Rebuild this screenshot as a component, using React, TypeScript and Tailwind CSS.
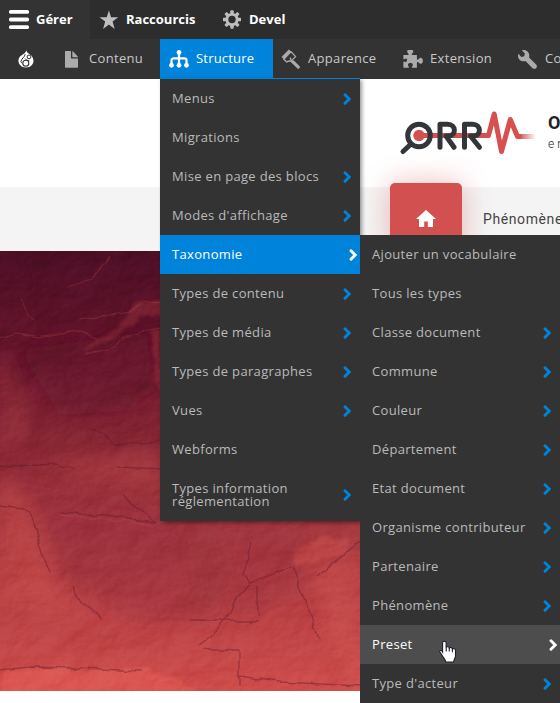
import React from "react";

const Chevron = ({ color, className = "" }: { color: string; className?: string }) => (
  <svg width="9" height="12" viewBox="0 0 9 12" className={className}>
    <path d="M2 1.8L6.2 6L2 10.2" fill="none" stroke={color} strokeWidth="2.9" strokeLinecap="round" strokeLinejoin="miter" />
  </svg>
);

type Item = { label: string; sub?: boolean; state?: "blue" | "grey"; tall?: boolean };

const structure: Item[] = [
  { label: "Menus", sub: true },
  { label: "Migrations" },
  { label: "Mise en page des blocs", sub: true },
  { label: "Modes d'affichage", sub: true },
  { label: "Taxonomie", sub: true, state: "blue" },
  { label: "Types de contenu", sub: true },
  { label: "Types de média", sub: true },
  { label: "Types de paragraphes", sub: true },
  { label: "Vues", sub: true },
  { label: "Webforms" },
  { label: "Types information réglementation", sub: true, tall: true },
];

const taxonomy: Item[] = [
  { label: "Ajouter un vocabulaire" },
  { label: "Tous les types" },
  { label: "Classe document", sub: true },
  { label: "Commune", sub: true },
  { label: "Couleur", sub: true },
  { label: "Département", sub: true },
  { label: "Etat document", sub: true },
  { label: "Organisme contributeur", sub: true },
  { label: "Partenaire", sub: true },
  { label: "Phénomène", sub: true },
  { label: "Preset", sub: true, state: "grey" },
  { label: "Type d'acteur", sub: true },
];

const Menu = ({ items }: { items: Item[] }) => (
  <ul className="w-[200px] bg-[#333]">
    {items.map((it) => (
      <li
        key={it.label}
        className={`flex items-center justify-between pl-3 ${it.tall ? "h-[52px]" : "h-[39px]"} ${
          it.state === "blue"
            ? "bg-[#0084db] pr-0.5 font-medium text-white"
            : it.state === "grey"
              ? "bg-[#4d4d4d] pr-0.5 font-medium text-white"
              : "pr-2 text-[#bababa]"
        }`}
      >
        <span className={it.tall ? "w-[140px] leading-[13px]" : "whitespace-nowrap"}>{it.label}</span>
        {it.sub && <Chevron color={it.state ? "#fff" : "#0084db"} className="shrink-0" />}
      </li>
    ))}
  </ul>
);

const Burger = () => (
  <svg width="20" height="19" viewBox="0 0 20 19" fill="#fff">
    <rect width="20" height="3.8" rx="1.6" />
    <rect y="7.6" width="20" height="3.8" rx="1.6" />
    <rect y="15.2" width="20" height="3.8" rx="1.6" />
  </svg>
);

const Star = () => (
  <svg width="20" height="20" viewBox="0 0 20 20" fill="#bebebe">
    <path d="M9.9 .4l2.2 6.8 7.1.1-5.6 4.3 2.1 7.3-5.8-4.3-5.8 4.3 2.1-7.3L.5 7.3l7.2-.1z" />
  </svg>
);

const Gear = () => (
  <svg width="18" height="19" viewBox="0 0 18 19">
    <g fill="#bebebe">
      {[0, 45, 90, 135].map((a) => (
        <rect key={a} x="7.3" y=".3" width="3.4" height="18.4" rx=".9" transform={`rotate(${a} 9 9.5)`} />
      ))}
      <circle cx="9" cy="9.5" r="6.6" />
    </g>
    <circle cx="9" cy="9.5" r="3.7" fill="#2d2d2d" />
  </svg>
);

const Drop = () => (
  <svg width="16" height="18" viewBox="0 0 16 18">
    <path d="M8.5 0C8.4 2.5 11 3.4 13 5.2c4.3 4 3.2 12.3-5 12.4C.2 17.6-1.5 9.5 2.6 6.1 4.9 4.3 7.7 3.3 8.5 0z" fill="#fff" />
    <circle cx="7.8" cy="13.2" r="3" fill="none" stroke="#333" strokeWidth="1.1" />
    <circle cx="11" cy="6.9" r="1.9" fill="none" stroke="#333" strokeWidth="1" />
    <path d="M7.2 4.2C7 7.2 3 8.6 3 11.5c0 1 .6 1.5 1.4 1.6M7 8.5c.8 1.3 2.5 2.3 4.4 2.3" fill="none" stroke="#333" strokeWidth="1" />
  </svg>
);

const File = () => (
  <svg width="13" height="17" viewBox="0 0 13 17" fill="#ababab">
    <path d="M.6 0H6v7c0 .4.2.6.6.6H13v8.5c0 .4-.2.6-.6.6H.6c-.4 0-.6-.2-.6-.6V.6C0 .2.2 0 .6 0z" />
    <path d="M7.3.5c0-.4.3-.5.6-.2l4.9 5.3c.3.3.1.6-.3.6H8c-.5 0-.7-.2-.7-.7z" />
  </svg>
);

const Org = () => (
  <svg width="20" height="18" viewBox="0 0 20 18" fill="#fff">
    <circle cx="10" cy="2.5" r="2.4" />
    <circle cx="2.5" cy="15.3" r="2.4" />
    <circle cx="10" cy="15.3" r="2.4" />
    <circle cx="17.5" cy="15.3" r="2.4" />
    <path d="M2.5 15V10.5Q2.5 8.4 4.6 8.4H15.4Q17.5 8.4 17.5 10.5V15M10 3V15" fill="none" stroke="#fff" strokeWidth="2.2" />
  </svg>
);

const Brush = () => (
  <svg width="19" height="20" viewBox="0 0 19 20">
    <path d="M7.9.5L.5 7.9l2.3 2.3L10 2.6z" fill="#ababab" />
    <path d="M10 2.6l4.6 5-4.9 4.8q-1.7-1.1-4 .6L2.8 10.2z" fill="none" stroke="#ababab" strokeWidth="1.3" strokeLinejoin="round" />
    <path d="M9.2 8.5l1.2 4.1L12.2 14" stroke="#ababab" strokeWidth="1.3" fill="none" />
    <path d="M12 12.8L17.3 18.1" stroke="#ababab" strokeWidth="3.1" strokeLinecap="round" />
  </svg>
);

const Puzzle = () => (
  <svg width="20" height="18" viewBox="0 0 20 18" fill="#ababab">
    <path d="M.4 5H5q1.2 0 .5-1.1L4.300 2.300Q3.700.2 5.200.1h4.100q1.500.1.900 2.200L8.800 3.900Q8.300 5 9.500 5h4.400v3.800q.1 1.300 1.300.6l1.800-1.600q2.700-.7 2.900 2.700-.2 4-2.900 3.200l-1.700-1.500q-1.400-.7-1.400.6v4.900H9.300c-.7 0-.7-.6-.2-1.100 1.500-1.500.7-3.500-1.700-3.500s-3.200 2-1.700 3.500c.5.500.5 1.100-.2 1.100H.4V12.300q0-1.300 1.300-.6c2.300 1.500 3.600-3.700.9-3.200L1.400 9.200Q.4 9.700.4 8.500z" />
  </svg>
);

const Wrench = () => (
  <svg width="19" height="19" viewBox="0 0 15.1 15.1" fill="#ababab">
    <path d="M14.416 11.586l-5.666-5.665c.15-.449.252-.921.252-1.421 0-2.485-2.016-4.5-4.502-4.5-.505 0-.981.102-1.434.255l2.431 2.431-.588 2.196-2.196.588-2.445-2.445c-.162.464-.268.956-.268 1.475 0 2.486 2.014 4.5 4.5 4.5.5 0 .972-.102 1.421-.251l5.667 5.665c.781.781 2.047.781 2.828 0s.781-2.047 0-2.828z" />
  </svg>
);

const Logo = () => (
  <svg width="138" height="46" viewBox="399 110 138 46" fill="none" strokeLinecap="round" strokeLinejoin="round" className="shrink-0">
    <defs>
      <linearGradient id="fade" gradientUnits="userSpaceOnUse" x1="519" x2="536" y1="0" y2="0">
        <stop stopColor="#d5504f" />
        <stop offset="1" stopColor="#d5504f" stopOpacity="0" />
      </linearGradient>
    </defs>
    <circle cx="419" cy="135.5" r="5.7" fill="#d5504f" />
    <path d="M419 135.5H488.500L494.200 114L501.500 151.500L510.300 119.500L517.500 136.500H519" stroke="#d5504f" strokeWidth="5" />
    <rect x="519" y="134" width="17" height="5" fill="url(#fade)" />
    <g stroke="#333638" strokeWidth="5">
      <circle cx="419" cy="135.5" r="11.3" />
      <path d="M410.5 144.5L403 151.5" />
      <path d="M440 147.3V124.3H447.5C456.5 124.3 456.5 136 448.5 136H446L454 147.3" />
      <path d="M464.5 147.3V124.3H472.5C481.5 124.3 481.5 136 473.5 136H470.5L479.5 147.3" />
    </g>
  </svg>
);

const Rock = () => (
  <svg width="560" height="440" viewBox="0 251 560 440" className="block shrink-0" preserveAspectRatio="none">
    <defs>
      <linearGradient id="base" x1="0" y1="0" x2="0" y2="1">
        <stop stopColor="#4d0f26" />
        <stop offset=".2" stopColor="#611329" />
        <stop offset=".4" stopColor="#842434" />
        <stop offset=".6" stopColor="#a2363e" />
        <stop offset=".8" stopColor="#b84145" />
        <stop offset="1" stopColor="#cf4e4c" />
      </linearGradient>
      <filter id="stone" x="0" y="0" width="1" height="1" colorInterpolationFilters="sRGB">
        <feTurbulence type="fractalNoise" baseFrequency=".022 .028" numOctaves="5" seed="8" result="n" />
        <feDiffuseLighting in="n" surfaceScale="7" diffuseConstant=".7" lightingColor="#fff">
          <feDistantLight azimuth="225" elevation="45" />
        </feDiffuseLighting>
      </filter>
      <filter id="soft" x="-.1" y="-.1" width="1.2" height="1.2" colorInterpolationFilters="sRGB">
        <feTurbulence type="fractalNoise" baseFrequency=".06" numOctaves="2" seed="3" result="w" />
        <feDisplacementMap in="SourceGraphic" in2="w" scale="7" xChannelSelector="R" yChannelSelector="G" />
        <feGaussianBlur stdDeviation=".7" />
      </filter>
      <filter id="wide"><feGaussianBlur stdDeviation="8" /></filter>
      <filter id="edge" x="-.1" y="-.1" width="1.2" height="1.2" colorInterpolationFilters="sRGB">
        <feTurbulence type="fractalNoise" baseFrequency=".05" numOctaves="4" seed="5" result="w" />
        <feDisplacementMap in="SourceGraphic" in2="w" scale="14" xChannelSelector="R" yChannelSelector="G" />
        <feGaussianBlur stdDeviation="1.6" />
      </filter>
    </defs>
    <rect y="251" width="560" height="440" fill="url(#base)" />
    <g filter="url(#wide)">
      <path d="M0 345L25 400 30 440 0 450z" fill="#a63840" opacity=".4" />
      <path d="M20 350L145 332 155 385 130 410 60 415z" fill="#641a2e" opacity=".45" />
      <path d="M30 490L65 580 130 620 210 625 230 570 215 520z" fill="#8e2c39" opacity=".35" />
      <path d="M40 460L160 450 160 490 90 480z" fill="#c74c4a" opacity=".3" />
      <path d="M0 480L30 500 55 580 90 620 0 610z" fill="#cc504c" opacity=".45" />
      <path d="M185 521H295L310 585 250 620 195 600z" fill="#9c333d" opacity=".4" />
      <path d="M310 570L360 550V691L330 650z" fill="#cf514d" opacity=".5" />
    </g>
    <g filter="url(#edge)">
      <path d="M136 305L147 299 162 300V312L142 316 130 326 105 342 84 356 100 336 124 322z" fill="#8d2c39" opacity=".6" />
      <path d="M0 672L60 668 150 671 180 680 195 694H0z" fill="#e35d55" opacity=".6" />
      <path d="M294 552L318 538 350 540 352 550 310 565 294 570z" fill="#cf514d" opacity=".45" />
      <path d="M148 332H160V350L162 400 156 380z" fill="#8d2c39" opacity=".6" />
    </g>
    <rect y="251" width="560" height="440" filter="url(#stone)" opacity=".25" className="mix-blend-soft-light" />
    <g fill="none" filter="url(#soft)" stroke="#5c162e" strokeWidth="1.3" strokeLinejoin="round" opacity=".42">
      <path d="M0 336L16 331 38 335 60 331 85 330 98 339M55 368L84 353 105 348 125 335 160 321M108 271L92 277 62 283 60 323" />
      <path d="M0 466L40 465 56 464 75 470M0 507L30 511 42 553 50 573M72 584L82 605 102 618M62 512L80 514 108 515 128 519 156 522 122 497" />
      <path d="M88 428L105 434 115 444 138 444 160 440M118 467L162 469M0 670L30 667 80 668 140 671" />
      <path d="M252 540L242 575 250 583 278 573 290 567M318 575L362 540M292 567L310 614 318 640M250 585L237 595 228 618 212 636 200 645M258 585L258 617M190 621L258 621M203 650H240V687M240 676L280 682 362 686" />
    </g>
    <g fill="none" filter="url(#soft)" stroke="#cc504c" strokeWidth="1.3" opacity=".25">
      <path d="M0 338L16 333 38 337 60 333 82 331 97 341M85 355L108 349 125 338 160 327M67 287L92 279 108 258M80 320L130 312 145 303 160 302" />
      <path d="M60 515L150 524M308 543L345 543 358 538M20 300L34 322M300 560L290 552" />
    </g>
  </svg>
);

const Hand = () => (
  <svg width="18" height="23" viewBox="0 0 18 23">
    <path
      d="M5.3 1.2c1.2 0 1.8.8 1.8 1.800v4.300c.3-.7 3-.8 3.200.7.700-.8 3-.6 3.100 1 .9-.8 3.100-.4 3.100 1.500v5.200c0 2.500-1.500 3.100-1.800 6.300H6.700c-.4-2.900-2.600-4.400-3.800-7L.9 12c-.6-1.300.9-2 2-1.100L3.600 12V3c0-1 .6-1.800 1.700-1.800z"
      fill="#fff"
      stroke="#1c1c2b"
      strokeWidth="1.1"
    />
    <path d="M7.2 7v4.6M10.3 8v3.6M13.4 9.3v2.9" stroke="#1c1c2b" strokeWidth="1.1" />
  </svg>
);

export default function App() {
  return (
    <div className="relative h-[703px] w-[560px] overflow-hidden bg-white font-['Open_Sans',sans-serif] text-[13px] tracking-[0.33px]">
      <nav className="flex h-[39px] bg-[#2d2d2d] font-bold tracking-normal text-white">
        <div className="flex w-[90px] items-center gap-[7px] bg-[#333] pl-[9px]"><Burger />Gérer</div>
        <div className="flex w-[124px] items-center gap-[7px] pl-[9px]"><Star />Raccourcis</div>
        <div className="flex items-center gap-2 pl-[9px]"><Gear />Devel</div>
      </nav>
      <nav className="flex h-10 overflow-hidden whitespace-nowrap bg-[#333] text-[#c8c8c8]">
        <div className="flex w-[65px] shrink-0 items-center pl-[18px]"><Drop /></div>
        <div className="flex w-[95px] shrink-0 items-center gap-[11px]"><File />Contenu</div>
        <div className="flex w-[113px] shrink-0 items-center gap-[7px] bg-[#0084db] pl-[9px] font-medium tracking-[0.2px] text-white"><Org />Structure</div>
        <div className="flex w-[121px] shrink-0 items-center gap-2 pl-2"><Brush />Apparence</div>
        <div className="flex w-[115px] shrink-0 items-center gap-[7px] pl-[9px]"><Puzzle />Extension</div>
        <div className="flex shrink-0 items-center gap-2 pl-[9px]"><Wrench />Configuration</div>
      </nav>

      <header className="flex h-[108px] items-start pl-[399px] pt-[31px] tracking-normal">
        <Logo />
        <div className="ml-[11px] mt-0.5 whitespace-nowrap font-['Roboto',sans-serif] text-[#222]">
          <div className="text-[18px] font-bold leading-[22px]">Observatoire</div>
          <div className="text-xs font-light leading-[20px] tracking-[3px]">en région</div>
        </div>
      </header>
      <div className="flex h-16 items-end bg-[#f4f4f4] pl-[390px] tracking-normal">
        <div className="flex h-[68px] w-[72px] shrink-0 justify-center rounded-t-[5px] bg-[#d35050] pt-[25px] shadow-[0_0_28px_rgba(211,80,80,0.4)]">
          <svg width="20" height="21" viewBox="0 0 20 21" fill="#fff">
            <path d="M10 2L20 11H17V19H11.8V13.5H8.2V19H3V11H0z" />
          </svg>
        </div>
        <div className="flex h-16 items-center whitespace-nowrap pl-[21px] font-['Roboto',sans-serif] text-sm tracking-[0.6px] text-[#444]">Phénomènes</div>
      </div>
      <Rock />

      <div className="absolute left-[160px] top-[78px] w-[200px] border-t border-[#0084db] shadow-[2px_2px_4px_rgba(0,0,0,0.4)]">
        <Menu items={structure} />
      </div>
      <div className="absolute left-[360px] top-[235px]">
        <Menu items={taxonomy} />
      </div>
      <div className="absolute left-[439px] top-[640px]"><Hand /></div>
    </div>
  );
}
